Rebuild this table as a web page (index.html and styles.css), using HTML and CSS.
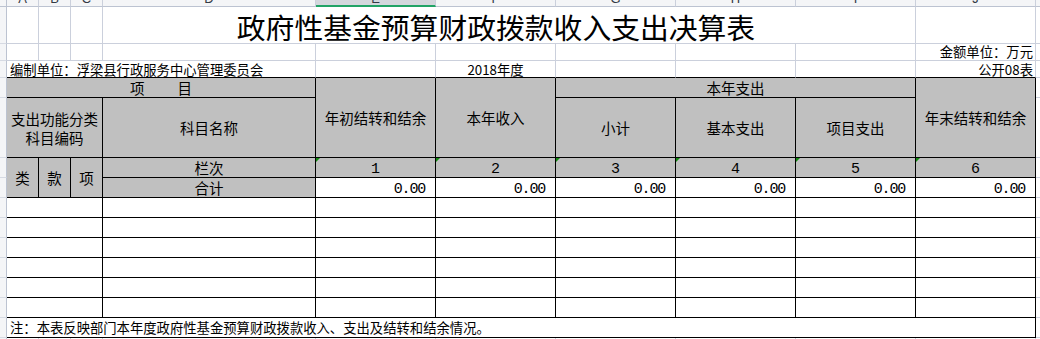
FILE: index.html
```html
<!DOCTYPE html>
<html lang="zh-CN">
<head>
<meta charset="utf-8">
<title>政府性基金预算财政拨款收入支出决算表</title>
<link rel="stylesheet" href="styles.css">
</head>
<body>
<div class="sheet">
  <!-- column header row -->
  <div class="corner"></div>
  <div class="ch">A</div><div class="ch">B</div><div class="ch">C</div><div class="ch">D</div>
  <div class="ch sel">E</div><div class="ch">F</div><div class="ch">G</div><div class="ch">H</div>
  <div class="ch">I</div><div class="ch">J</div>
  <div class="ch strip"></div>

  <!-- title row -->
  <div class="rh"></div>
  <div class="g"></div><div class="g"></div><div class="g"></div>
  <div class="g c6 title">政府性基金预算财政拨款收入支出决算表</div>
  <div class="g"></div>
  <div class="sp"></div>

  <!-- unit row -->
  <div class="rh"></div>
  <div class="g"></div><div class="g"></div><div class="g"></div><div class="g"></div>
  <div class="g"></div><div class="g"></div><div class="g"></div><div class="g"></div><div class="g"></div>
  <div class="g small right">金额单位：万元</div>
  <div class="sp"></div>

  <!-- org row -->
  <div class="rh"></div>
  <div class="g top c4 small left low">编制单位：浮梁县行政服务中心管理委员会</div>
  <div class="g top"></div>
  <div class="g top small center low">2018年度</div>
  <div class="g top"></div><div class="g top"></div><div class="g top"></div>
  <div class="g top small right low">公开08表</div>
  <div class="sp"></div>

  <!-- header row 1 -->
  <div class="rh"></div>
  <div class="t hd c4"><span class="wide">项 目</span></div>
  <div class="t hd r2">年初结转和结余</div>
  <div class="t hd r2">本年收入</div>
  <div class="t hd c3">本年支出</div>
  <div class="t hd r2">年末结转和结余</div>
  <div class="sp"></div>

  <!-- header row 2 -->
  <div class="rh"></div>
  <div class="t hd c3 two">支出功能分类<br>科目编码</div>
  <div class="t hd">科目名称</div>
  <div class="t hd">小计</div>
  <div class="t hd">基本支出</div>
  <div class="t hd">项目支出</div>
  <div class="sp"></div>

  <!-- 栏次 row -->
  <div class="rh"></div>
  <div class="t hd r2">类</div>
  <div class="t hd r2">款</div>
  <div class="t hd r2">项</div>
  <div class="t hd">栏次</div>
  <div class="t hd num tri">1</div>
  <div class="t hd num tri">2</div>
  <div class="t hd num tri">3</div>
  <div class="t hd num tri">4</div>
  <div class="t hd num tri">5</div>
  <div class="t hd num tri">6</div>
  <div class="sp"></div>

  <!-- 合计 row -->
  <div class="rh"></div>
  <div class="t hd">合计</div>
  <div class="t num val">0.00</div>
  <div class="t num val">0.00</div>
  <div class="t num val">0.00</div>
  <div class="t num val">0.00</div>
  <div class="t num val">0.00</div>
  <div class="t num val">0.00</div>
  <div class="sp"></div>

  <!-- empty data rows -->
  <div class="rh"></div><div class="t c3"></div><div class="t"></div><div class="t"></div><div class="t"></div><div class="t"></div><div class="t"></div><div class="t"></div><div class="t"></div><div class="sp"></div>
  <div class="rh"></div><div class="t c3"></div><div class="t"></div><div class="t"></div><div class="t"></div><div class="t"></div><div class="t"></div><div class="t"></div><div class="t"></div><div class="sp"></div>
  <div class="rh"></div><div class="t c3"></div><div class="t"></div><div class="t"></div><div class="t"></div><div class="t"></div><div class="t"></div><div class="t"></div><div class="t"></div><div class="sp"></div>
  <div class="rh"></div><div class="t c3"></div><div class="t"></div><div class="t"></div><div class="t"></div><div class="t"></div><div class="t"></div><div class="t"></div><div class="t"></div><div class="sp"></div>
  <div class="rh"></div><div class="t c3"></div><div class="t"></div><div class="t"></div><div class="t"></div><div class="t"></div><div class="t"></div><div class="t"></div><div class="t"></div><div class="sp"></div>
  <div class="rh"></div><div class="t c3"></div><div class="t"></div><div class="t"></div><div class="t"></div><div class="t"></div><div class="t"></div><div class="t"></div><div class="t"></div><div class="sp"></div>

  <!-- note row -->
  <div class="rh"></div>
  <div class="t c10 small left">注：本表反映部门本年度政府性基金预算财政拨款收入、支出及结转和结余情况。</div>
  <div class="sp"></div>

  <!-- trailing row (only its top pixel is in view) -->
  <div class="rh last"></div>
  <div class="g last"></div><div class="g last"></div><div class="g last"></div><div class="g last"></div>
  <div class="g last"></div><div class="g last"></div><div class="g last"></div><div class="g last"></div><div class="g last"></div><div class="g last"></div>
  <div class="sp last"></div>
</div>
</body>
</html>
```

FILE: styles.css
```css
html, body {
  margin: 0;
  padding: 0;
  background: #ffffff;
}

body {
  width: 1040px;
  height: 339px;
  overflow: hidden;
  font-family: "Noto Sans CJK SC", sans-serif;
  color: #000000;
}

.sheet {
  display: grid;
  grid-template-columns: 7px 32px 32px 32px 213px repeat(6, 120px) 4px;
  grid-template-rows: 7px 37px 17px 17px 20px 60px 20px 20px repeat(6, 20px) 20px 1px;
}

.sheet > div {
  box-sizing: border-box;
  min-width: 0;
  white-space: nowrap;
}

/* spreadsheet chrome */
.corner {
  background: #f4f5f7;
  border-right: 1px solid #bcc3d1;
  border-bottom: 1px solid #bcc3d1;
}

.ch {
  background: #f4f5f7;
  border-right: 1px solid #cbd0dc;
  border-bottom: 1px solid #bcc3d1;
  display: flex;
  justify-content: center;
  align-items: flex-end;
  overflow: hidden;
  font-family: "Liberation Sans", sans-serif;
  font-size: 13px;
  line-height: 13px;
  color: #333a45;
  padding-bottom: 1px;
}

.ch.sel {
  background: #d4d7dd;
  border-bottom: 2px solid #21a366;
  padding-bottom: 0;
}

.ch.strip {
  border-right: none;
}

.rh {
  background: #f4f5f7;
  border-right: 1px solid #bcc3d1;
  border-bottom: 1px solid #d6dae3;
}

.sp {
  border-bottom: 1px solid #cbd0dc;
}

/* grid cells outside the table */
.g {
  border-right: 1px solid #cbd0dc;
  border-bottom: 1px solid #cbd0dc;
  display: flex;
  align-items: center;
}

.g.top {
  border-bottom-color: #000000;
}

.sheet > .last {
  border-bottom: none;
}

/* table cells */
.t {
  border-right: 1px solid #000000;
  border-bottom: 1px solid #000000;
  display: flex;
  align-items: center;
  justify-content: center;
  font-size: 14.5px;
  line-height: 19px;
  text-align: center;
}

.hd {
  background: #c0c0c0;
}

.c3 { grid-column: span 3; }
.c4 { grid-column: span 4; }
.c6 { grid-column: span 6; }
.c10 { grid-column: span 10; }
.r2 { grid-row: span 2; }

.title {
  justify-content: center;
  font-size: 28.8px;
  line-height: 32px;
  padding-top: 4px;
  padding-right: 26px;
}

.small {
  font-size: 13.33px;
  line-height: 16px;
}

.left {
  justify-content: flex-start;
  padding-left: 3px;
}

.right {
  justify-content: flex-end;
  padding-right: 2px;
}

.center {
  justify-content: center;
}

.low {
  padding-top: 2px;
}

.wide {
  word-spacing: 30px;
}

.two {
  line-height: 19px;
}

.num {
  font-family: "Liberation Mono", monospace;
  font-size: 15px;
  padding-top: 4px;
}

.val {
  justify-content: flex-end;
  padding-right: 10px;
  letter-spacing: -1.2px;
}

.tri {
  position: relative;
}

.tri::before {
  content: "";
  position: absolute;
  top: 0;
  left: 0;
  width: 0;
  height: 0;
  border-top: 4px solid #108a10;
  border-right: 4px solid transparent;
}
```
